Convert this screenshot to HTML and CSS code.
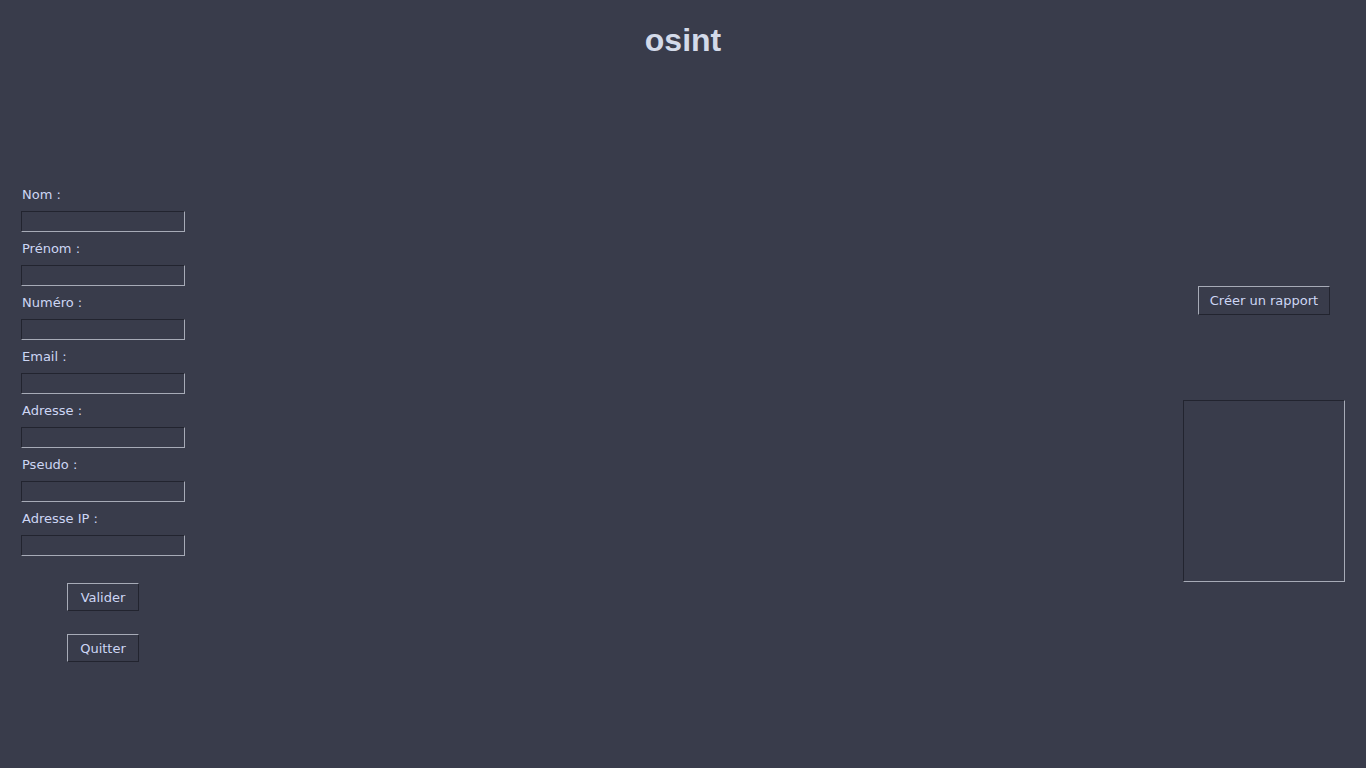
FILE: index.html
```html
<!DOCTYPE html>
<html lang="fr">
<head>
<meta charset="utf-8">
<title>osint</title>
<link rel="stylesheet" href="styles.css">
</head>
<body>
<h1 class="title">osint</h1>
<main class="main">
  <form class="form">
    <div class="field"><label class="label">Nom :</label><input class="entry" type="text"></div>
    <div class="field"><label class="label">Prénom :</label><input class="entry" type="text"></div>
    <div class="field"><label class="label">Numéro :</label><input class="entry" type="text"></div>
    <div class="field"><label class="label">Email :</label><input class="entry" type="text"></div>
    <div class="field"><label class="label">Adresse :</label><input class="entry" type="text"></div>
    <div class="field"><label class="label">Pseudo :</label><input class="entry" type="text"></div>
    <div class="field"><label class="label">Adresse IP :</label><input class="entry" type="text"></div>
    <button type="button" class="btn btn-valider">Valider</button>
    <button type="button" class="btn btn-quitter">Quitter</button>
  </form>
  <aside class="side">
    <button type="button" class="btn btn-rapport">Créer un rapport</button>
    <div class="output"></div>
  </aside>
</main>
</body>
</html>
```
FILE: styles.css
```css
html, body {
  margin: 0;
  padding: 0;
}
body {
  background: #393c4b;
  color: #cdd6f4;
  font-family: "DejaVu Sans", sans-serif;
  font-size: 13px;
  min-height: 100vh;
}
.title {
  margin: 0;
  padding-top: 22px;
  text-align: center;
  font-family: "Liberation Sans", Arial, sans-serif;
  font-weight: bold;
  font-size: 32px;
  line-height: 37px;
  color: #d3dae9;
}
.main {
  display: flex;
  justify-content: space-between;
  align-items: flex-start;
  padding: 0 21px;
}
.form {
  margin-top: 119px;
  width: 164px;
  display: flex;
  flex-direction: column;
}
.field {
  display: flex;
  flex-direction: column;
}
.label {
  display: block;
  box-sizing: border-box;
  height: 33px;
  padding-top: 8px;
  line-height: 18px;
  padding-left: 1px;
}
.entry {
  box-sizing: border-box;
  width: 164px;
  height: 21px;
  margin: 0;
  padding: 0 2px;
  background: #393c4b;
  color: #cdd6f4;
  font: inherit;
  border-style: solid;
  border-width: 1px;
  border-color: #22242f #a7abb7 #a7abb7 #22242f;
  outline: none;
}
.btn {
  box-sizing: border-box;
  margin: 0;
  padding: 1px 0 0;
  background: #393c4b;
  color: #cdd6f4;
  font-family: "DejaVu Sans", sans-serif;
  font-size: 13px;
  line-height: 18px;
  border-style: solid;
  border-width: 1px;
  border-color: #a7abb7 #22242f #22242f #a7abb7;
  display: flex;
  align-items: center;
  justify-content: center;
}
.btn-valider {
  align-self: center;
  width: 72px;
  height: 28px;
  margin-top: 27px;
}
.btn-quitter {
  align-self: center;
  width: 72px;
  height: 28px;
  margin-top: 23px;
}
.side {
  width: 162px;
  display: flex;
  flex-direction: column;
  align-items: center;
}
.btn-rapport {
  margin-top: 227px;
  width: 132px;
  height: 29px;
}
.output {
  box-sizing: border-box;
  margin-top: 85px;
  width: 162px;
  height: 182px;
  border-style: solid;
  border-width: 1px;
  border-color: #22242f #a7abb7 #a7abb7 #22242f;
}
```
